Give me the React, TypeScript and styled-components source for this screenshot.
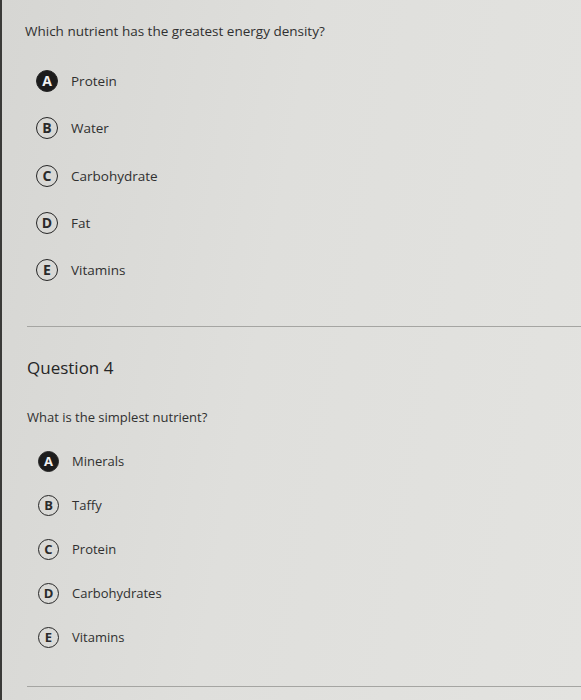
import React from 'react';
import styled, { createGlobalStyle } from 'styled-components';

const GlobalStyle = createGlobalStyle`
  html, body {
    margin: 0;
    padding: 0;
    background: #dcdcd9;
  }
  body {
    font-family: 'Open Sans', 'Liberation Sans', sans-serif;
    color: #333333;
  }
`;

const Page = styled.div`
  min-height: 700px;
  box-sizing: border-box;
  border-left: 2px solid #3a3a38;
  background: linear-gradient(100deg, #d6d6d3 0%, #dfdfdc 45%, #e3e3e0 100%);
  padding-top: 21px;
  overflow: hidden;
`;

const QuestionBlock = styled.section<{ $indent: number }>`
  padding-left: ${(p) => p.$indent}px;
`;

const Heading = styled.h2`
  margin: 0 0 27px 0;
  font-size: 17px;
  font-weight: 400;
  line-height: 24px;
  color: #262626;
`;

const Prompt = styled.p<{ $size: number }>`
  margin: 0;
  font-size: ${(p) => p.$size}px;
  line-height: 20px;
  color: #303030;
`;

const OptionList = styled.ul<{ $gap: number; $top: number }>`
  list-style: none;
  margin: ${(p) => p.$top}px 0 0 0;
  padding: 0 0 0 11px;
  display: flex;
  flex-direction: column;
  gap: ${(p) => p.$gap}px;
`;

const OptionRow = styled.li`
  display: flex;
  align-items: center;
  gap: 13px;
  height: 20px;
`;

const Letter = styled.span<{ $selected?: boolean; $size: number }>`
  box-sizing: border-box;
  flex: none;
  width: ${(p) => p.$size}px;
  height: ${(p) => p.$size}px;
  border-radius: 50%;
  display: flex;
  align-items: center;
  justify-content: center;
  font-size: ${(p) => Math.round(p.$size * 0.62)}px;
  font-weight: 700;
  line-height: 1;
  border: 1.6px solid #262626;
  background: ${(p) => (p.$selected ? '#1c1c1c' : 'transparent')};
  color: ${(p) => (p.$selected ? '#f0f0f0' : '#2a2a2a')};
`;

const OptionText = styled.span<{ $size: number }>`
  font-size: ${(p) => p.$size}px;
  color: #303030;
`;

const Divider = styled.hr<{ $top: number; $bottom: number }>`
  border: none;
  height: 1px;
  background: #a5a5a2;
  margin: ${(p) => p.$top}px 0 ${(p) => p.$bottom}px 25px;
`;

type Option = { letter: string; text: string; selected?: boolean };

const first: Option[] = [
  { letter: 'A', text: 'Protein', selected: true },
  { letter: 'B', text: 'Water' },
  { letter: 'C', text: 'Carbohydrate' },
  { letter: 'D', text: 'Fat' },
  { letter: 'E', text: 'Vitamins' },
];

const second: Option[] = [
  { letter: 'A', text: 'Minerals', selected: true },
  { letter: 'B', text: 'Taffy' },
  { letter: 'C', text: 'Protein' },
  { letter: 'D', text: 'Carbohydrates' },
  { letter: 'E', text: 'Vitamins' },
];

type OptionsProps = {
  items: Option[];
  gap: number;
  top: number;
  circle: number;
  text: number;
};

function Options({ items, gap, top, circle, text }: OptionsProps) {
  return (
    <OptionList $gap={gap} $top={top}>
      {items.map((o) => (
        <OptionRow key={o.letter}>
          <Letter $selected={o.selected} $size={circle}>
            {o.letter}
          </Letter>
          <OptionText $size={text}>{o.text}</OptionText>
        </OptionRow>
      ))}
    </OptionList>
  );
}

export default function App() {
  return (
    <>
      <GlobalStyle />
      <Page>
        <QuestionBlock $indent={23}>
          <Prompt $size={13.5}>Which nutrient has the greatest energy density?</Prompt>
          <Options items={first} gap={27.3} top={30} circle={22} text={13.5} />
        </QuestionBlock>
        <Divider $top={46} $bottom={29} />
        <QuestionBlock $indent={25}>
          <Heading>Question 4</Heading>
          <Prompt $size={13}>What is the simplest nutrient?</Prompt>
          <Options items={second} gap={24} top={24} circle={21} text={13} />
        </QuestionBlock>
        <Divider $top={39} $bottom={0} />
      </Page>
    </>
  );
}
